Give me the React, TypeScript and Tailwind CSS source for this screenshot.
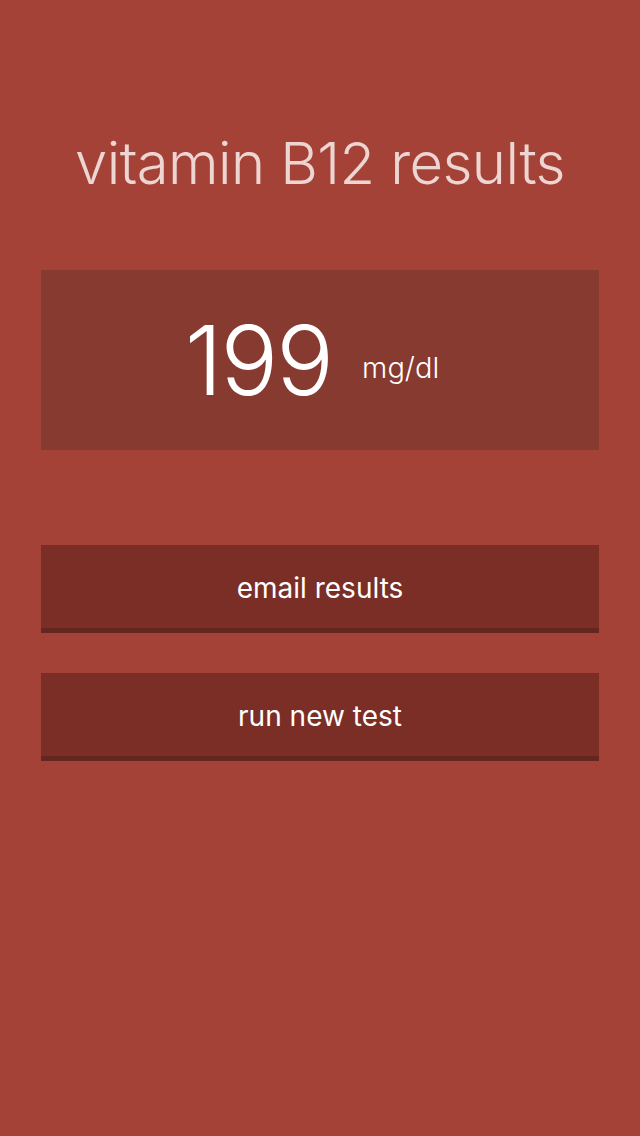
import React from "react";

export default function App() {
  return (
    <div
      className="w-[640px] h-[1136px] bg-[#a44238] flex flex-col"
      style={{ fontFamily: "Inter, 'Liberation Sans', sans-serif" }}
    >
      <h1 className="mt-[126px] h-[74px] flex items-center justify-center text-[58px] font-light text-[#edd5d2] tracking-[-0.6px]">
        vitamin B12 results
      </h1>
      <div className="mt-[70px] mx-[41px] h-[180px] bg-[#873a30] flex items-center justify-center pr-[16px]">
        <span className="text-[96px] font-light text-white leading-none tracking-[-2px]">199</span>
        <span className="ml-[30px] mt-[16px] text-[29px] font-light text-white">mg/dl</span>
      </div>
      <div className="mt-[95px] mx-[41px] flex flex-col gap-[40px]">
        <button className="h-[88px] bg-[#7a2e25] border-b-[5px] border-[#642720] text-white text-[28px] flex items-center justify-center pt-[2px]">
          email results
        </button>
        <button className="h-[88px] bg-[#7a2e25] border-b-[5px] border-[#642720] text-white text-[28px] flex items-center justify-center pt-[2px]">
          run new test
        </button>
      </div>
    </div>
  );
}
